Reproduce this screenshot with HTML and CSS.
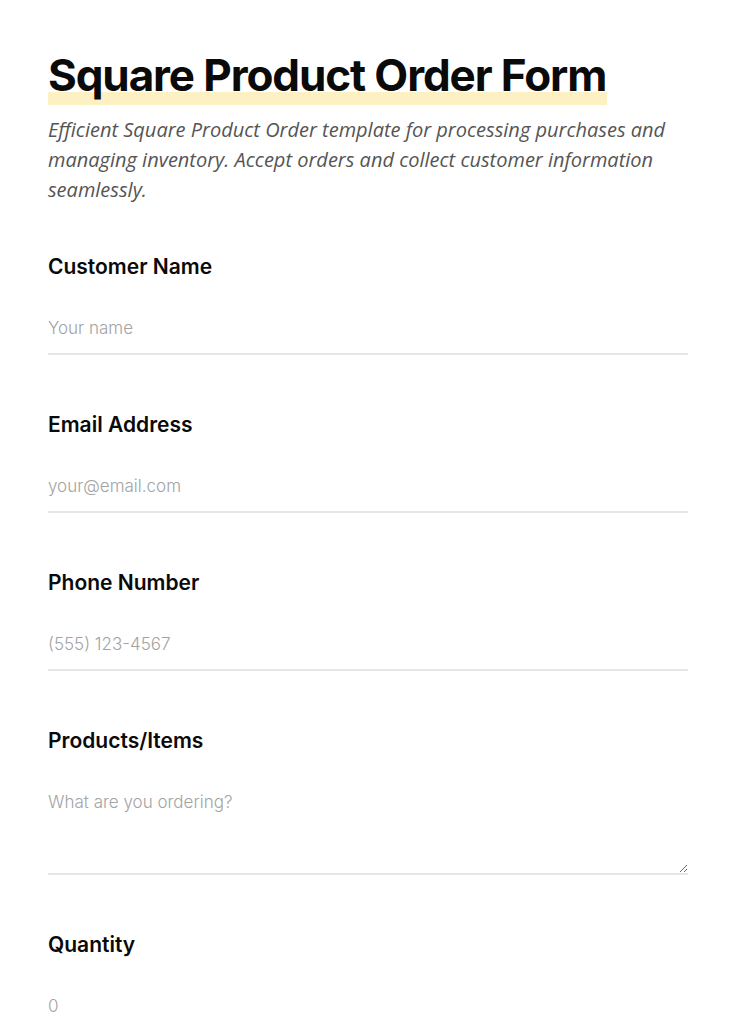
FILE: index.html
```html
<!DOCTYPE html>
<html lang="en">
<head>
<meta charset="utf-8">
<title>Square Product Order Form</title>
<link rel="stylesheet" href="styles.css">
</head>
<body>
<main class="page">
  <header class="head">
    <h1 class="title">Square Product Order Form</h1>
    <p class="desc">Efficient Square Product Order template for processing purchases and managing inventory. Accept orders and collect customer information seamlessly.</p>
  </header>
  <form class="form">
    <div class="field">
      <label class="label" for="name">Customer Name</label>
      <input class="input" id="name" type="text" placeholder="Your name">
    </div>
    <div class="field">
      <label class="label" for="email">Email Address</label>
      <input class="input" id="email" type="email" placeholder="your@email.com">
    </div>
    <div class="field">
      <label class="label" for="phone">Phone Number</label>
      <input class="input" id="phone" type="tel" placeholder="(555) 123-4567">
    </div>
    <div class="field">
      <label class="label" for="items">Products/Items</label>
      <textarea class="input area" id="items" placeholder="What are you ordering?"></textarea>
    </div>
    <div class="field">
      <label class="label" for="qty">Quantity</label>
      <input class="input" id="qty" type="number" placeholder="0">
    </div>
  </form>
</main>
</body>
</html>
```
FILE: styles.css
```css
* { box-sizing: border-box; }
html, body { margin: 0; background: #fff; }
body { font-family: Inter, "Noto Sans", sans-serif; color: #111; }
.page { padding: 51px 48px 40px; width: 736px; }
.head { display: flex; flex-direction: column; align-items: flex-start; }
.title {
  display: inline-block;
  margin: 0;
  font-size: 44px;
  line-height: 48px;
  padding: 0 1px 6px 0;
  font-weight: 700;
  letter-spacing: -0.025em;
  color: #0a0a0a;
  background: linear-gradient(#fdf1c4, #fdf1c4) no-repeat left bottom / 100% 13px;
}
.desc {
  margin: 10px 0 0;
  font-family: "Open Sans", sans-serif;
  font-style: italic;
  font-size: 20px;
  line-height: 30px;
  color: #555;
  letter-spacing: 0;
}
.form { margin-top: 49px; display: flex; flex-direction: column; gap: 57px; }
.field { display: flex; flex-direction: column; }
.label {
  font-size: 21px;
  line-height: 26px;
  font-weight: 600;
  letter-spacing: 0;
  color: #0a0a0a;
}
.input {
  margin-top: 26px;
  border: 0;
  border-bottom: 2px solid #e6e6e6;
  padding: 10px 0 13px;
  font-family: Inter, sans-serif;
  font-size: 17px;
  line-height: 24px;
  color: #111;
  background: transparent;
  outline: none;
  width: 100%;
}
.input::placeholder { color: #a3a3a3; font-weight: 300; }
.area { height: 95px; resize: vertical; display: block; }
```
